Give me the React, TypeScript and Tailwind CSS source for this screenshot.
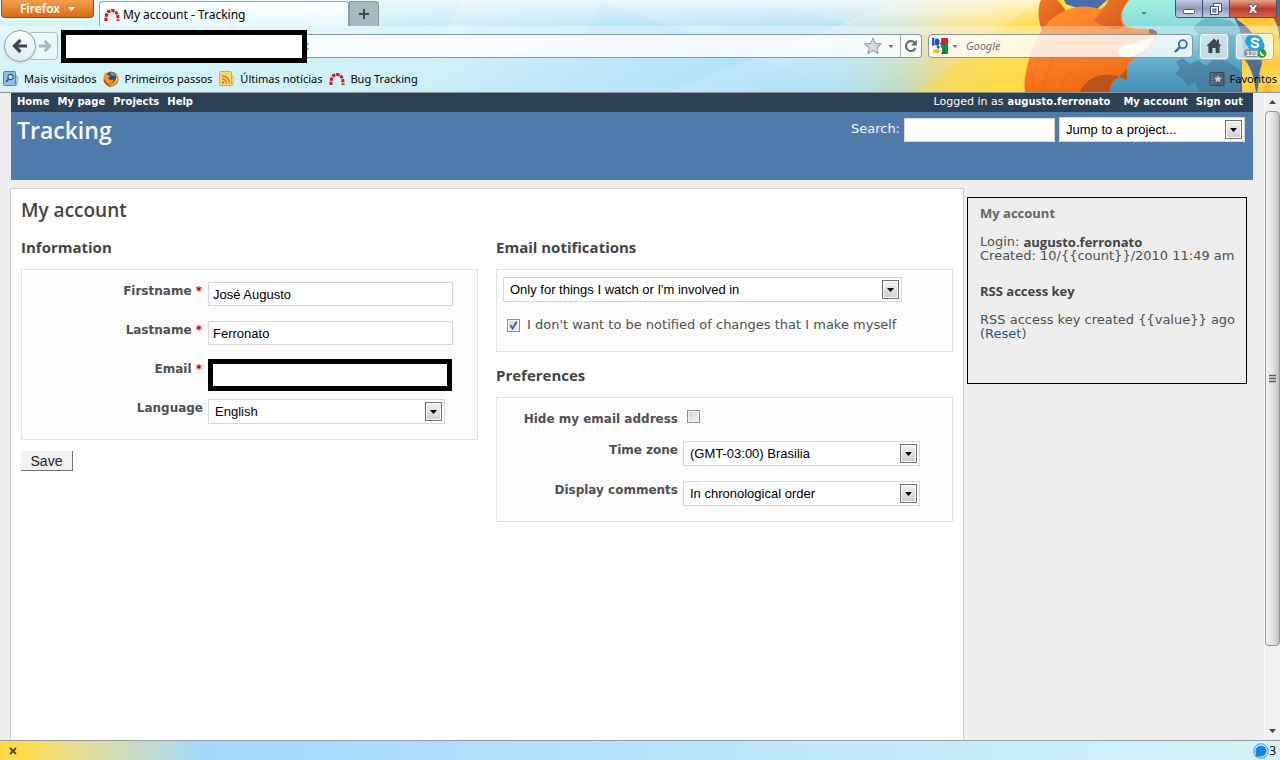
import React, { useState } from "react";

const verdana = "font-['DejaVu_Sans',Verdana,sans-serif]";
const trebuchet = "font-['Open_Sans','Trebuchet_MS',sans-serif]";
const segoe = "font-['Noto_Sans','Segoe_UI',sans-serif]";
const arial = "font-['Liberation_Sans',Arial,sans-serif]";

function ThemeArt() {
  return (
    <svg
      className="pointer-events-none absolute top-0 right-0 h-[92px] w-[1280px]"
      viewBox="0 0 1280 92"
      aria-hidden="true"
    >
      <defs>
        <linearGradient id="sky" x1="0" x2="1">
          <stop offset="0" stopColor="#d3f4fa" />
          <stop offset="0.28" stopColor="#ccf0f9" />
          <stop offset="0.45" stopColor="#bce6fa" />
          <stop offset="0.6" stopColor="#addffa" />
          <stop offset="0.66" stopColor="#b0dff2" />
          <stop offset="0.705" stopColor="#c3dcc0" />
          <stop offset="0.745" stopColor="#f1da70" />
          <stop offset="0.78" stopColor="#ffdc50" />
          <stop offset="1" stopColor="#ffd53c" />
        </linearGradient>
        <linearGradient id="topGlow" x1="0" x2="0" y1="0" y2="1">
          <stop offset="0" stopColor="#fff" stopOpacity="0.65" />
          <stop offset="1" stopColor="#fff" stopOpacity="0" />
        </linearGradient>
        <linearGradient id="beam" x1="0" x2="0.6" y1="0" y2="1">
          <stop offset="0" stopColor="#fff" stopOpacity="0.65" />
          <stop offset="1" stopColor="#fff" stopOpacity="0" />
        </linearGradient>
        <linearGradient id="globe" x1="0" x2="0" y1="0" y2="1">
          <stop offset="0" stopColor="#a0f0de" />
          <stop offset="0.4" stopColor="#7fd3de" />
          <stop offset="0.7" stopColor="#5aa8c8" />
          <stop offset="1" stopColor="#4a90b8" />
        </linearGradient>
        <linearGradient id="fur" x1="0" x2="0.5" y1="0" y2="1">
          <stop offset="0" stopColor="#ff9c3a" />
          <stop offset="0.5" stopColor="#fb7b20" />
          <stop offset="1" stopColor="#f06a14" />
        </linearGradient>
        <linearGradient id="ear" x1="0" x2="1" y1="0" y2="1">
          <stop offset="0" stopColor="#f27a2a" />
          <stop offset="1" stopColor="#cf571c" />
        </linearGradient>
        <linearGradient id="flame" x1="0" x2="0" y1="0" y2="1">
          <stop offset="0" stopColor="#ffc22e" />
          <stop offset="0.6" stopColor="#ffe061" />
          <stop offset="1" stopColor="#ffc53a" />
        </linearGradient>
      </defs>
      <rect width="1280" height="92" fill="url(#sky)" />
      <path d="M463 0 L410 92 H560 L600 0Z" fill="url(#beam)" opacity="0.35" />
      <path d="M600 0 L846 92 H990 L1000 0Z" fill="url(#beam)" opacity="0.4" />
      <path d="M668 92 L850 21 L900 0 H1040 L915 92Z" fill="url(#beam)" opacity="0.7" />
      <path d="M850 24 L905 0 H760Z" fill="#dff3fb" opacity="0.25" />
      <path d="M915 92 L1040 12 V92Z" fill="#ffd942" opacity="0.4" />
      <rect width="1045" height="26" fill="url(#topGlow)" />

      <path d="M1100 92 L1110 0 H1280 V92Z" fill="url(#globe)" />
      <path d="M1064 0 H1107 L1096 10 Q1080 10 1066 4Z" fill="#4870a8" />
      <path
        d="M1193 27 L1203 19 L1213 18 L1230 20 L1238 26 L1246 40 L1245 68 L1232 72 L1226 60 L1214 56 L1206 62 L1197 52 L1202 40Z"
        fill="#4e9ab4"
        opacity="0.5"
      />
      <path
        d="M1176 62 L1182 58 L1190 64 L1198 60 L1206 66 L1216 56 L1228 62 L1240 70 L1244 92 H1199 L1195 82 L1188 86 L1182 78 L1175 74 L1180 68Z"
        fill="#42789a"
        opacity="0.7"
      />
      <path d="M1232 0 H1280 V92 H1240 L1243 50 C1243 34 1238 24 1232 14Z" fill="#4c6c8e" />

      <path d="M1042 30 C1036 16 1039 4 1041 0 L1057 0 C1065 8 1067 12 1065 16Z" fill="url(#ear)" />
      <path
        d="M1025 92 C1022 72 1036 30 1053 18 C1066 8 1082 3 1100 9 L1116 0 H1129 C1122 8 1120 16 1124 25 C1132 31 1146 27 1155 31 C1160 35 1154 44 1148 49 C1137 59 1125 61 1127 69 L1127 80 L1119 77 C1112 81 1110 86 1110 92Z"
        fill="url(#fur)"
      />
      <path d="M1094 21 C1100 12 1108 4 1108 0 H1129 C1121 9 1117 18 1124 27 C1117 31 1107 29 1094 21Z" fill="url(#ear)" />
      <path d="M1119 50 C1124 42 1139 44 1154 37 C1152 48 1139 54 1130 57 C1123 59 1117 56 1119 50Z" fill="#fff1e6" />
      <path d="M1149 29 C1153 29 1158 31 1157 34 C1155 36 1151 35 1149 33Z" fill="#5a4440" />
      <path d="M1127 69 L1127 80 L1118 76 C1100 72 1086 78 1080 92 H1110 C1109 84 1113 80 1119 77Z" fill="#b9531a" />
      <g fill="none" stroke="#dc5410" strokeOpacity="0.25" strokeWidth="1.3">
        <path d="M1033 92 C1030 74 1037 63 1040 55" />
        <path d="M1043 92 C1042 76 1050 68 1052 60" />
        <path d="M1060 92 C1059 83 1066 76 1071 72" />
      </g>

      <path
        d="M1237 16 H1272 C1278 24 1280 34 1280 44 V66 L1262 66 C1262 44 1252 28 1237 20Z"
        fill="url(#flame)"
      />
      <path d="M1242 92 V57 C1250 64 1254 76 1256 92Z" fill="url(#flame)" />
      <path d="M1257 92 C1260 82 1258 70 1263 62 L1267 66 H1280 V92Z" fill="url(#flame)" />
      <path d="M1272 16 C1277 20 1279 26 1280 30 V16Z" fill="#b8502a" />
      <path d="M1262 92 C1266 86 1266 80 1268 76 C1271 82 1272 88 1271 92Z" fill="#ffab32" opacity="0.6" />

      <rect y="26" width="1280" height="66" fill="url(#beam)" opacity="0.3" />
      <rect y="26" width="1280" height="9" fill="#fff" opacity="0.25" />
    </svg>
  );
}

function RedmineMark() {
  return (
    <svg className="h-4 w-4 shrink-0" viewBox="0 0 16 16" aria-hidden="true">
      <path
        d="M2 14 C1.6 7 4 3.5 8 3.5 S14.4 7 14 14"
        fill="none"
        stroke="#c8161d"
        strokeWidth="3"
        strokeDasharray="3.3 1"
      />
    </svg>
  );
}

function MostVisited() {
  return (
    <svg className="h-4 w-4 shrink-0" viewBox="0 0 16 16" aria-hidden="true">
      <path d="M11 5 H14 Q15 9 13.5 14 H11Z" fill="#d6ebf8" stroke="#5e9ac8" />
      <rect x="0.5" y="0.5" width="12" height="14" rx="1" fill="#8cc2e6" stroke="#4a86b8" />
      <circle cx="7.5" cy="6" r="2.6" fill="#cfe8f8" stroke="#2b5f92" strokeWidth="1.2" />
      <path d="M5.6 8 L3 11" stroke="#2b5f92" strokeWidth="1.8" />
    </svg>
  );
}

function FirefoxMark() {
  return (
    <svg className="h-4 w-4 shrink-0" viewBox="0 0 16 16" aria-hidden="true">
      <circle cx="8" cy="8" r="7.6" fill="#e2701a" />
      <circle cx="8" cy="6.4" r="5.2" fill="#22508f" />
      <path d="M7 2 Q11 1 12.5 5 Q10 4 9 5Z" fill="#5ea0dc" />
      <path d="M0.8 5 L2 1.4 L4 3.8 L7 4.6 L5.4 7.4 Q7 10 11 8.6 Q10 12.6 6 12.4 Q2 11.6 0.8 5Z" fill="#f59628" />
      <path d="M13.6 3 Q16 8 12.6 12 Q9 15.6 5 13.8 Q11 14 12.4 9.6 Q13.6 7 13.6 3Z" fill="#fbc83e" />
      <path d="M1 9 Q3 15 8 15.4" fill="none" stroke="#a43a10" />
    </svg>
  );
}

function FeedMark() {
  return (
    <svg className="h-4 w-4 shrink-0" viewBox="0 0 16 16" aria-hidden="true">
      <path d="M11 5 H14 Q15 9 13.5 14 H11Z" fill="#fdf0bc" stroke="#d9ac3c" />
      <rect x="0.5" y="0.5" width="12" height="14" rx="1" fill="#f8d873" stroke="#d9a93a" />
      <circle cx="4" cy="11.5" r="1.2" fill="#e07a1c" />
      <path d="M3 8 Q7 8 7.4 12.6 M3 5 Q10 5 10.4 12.6" fill="none" stroke="#e07a1c" strokeWidth="1.5" />
    </svg>
  );
}

function GoogleMark() {
  return (
    <svg className="h-4 w-4 shrink-0" viewBox="0 0 16 16" aria-hidden="true">
      <rect width="16" height="16" rx="1" fill="#fff" />
      <path d="M9 0 H15 Q16 0 16 1 V6 H8 Q10 3 9 0Z" fill="#e01b22" />
      <path d="M9 6 H16 V15 Q16 16 15 16 H9 Q11 12 9.5 9.5Q8 8 9 6Z" fill="#16893a" />
      <ellipse cx="5" cy="4" rx="2.6" ry="3.6" fill="#1d55c4" />
      <path d="M0 0 H3 Q0.6 3 3 7 L0 8Z" fill="#1d55c4" />
      <path d="M6 7 Q9 9 6.4 11 L4.4 9Z" fill="#1d55c4" />
      <ellipse cx="4.6" cy="13.2" rx="3.4" ry="2.2" fill="#f6b620" />
    </svg>
  );
}

function Caret({ className }: { className: string }) {
  return (
    <svg className={className} viewBox="0 0 7 4" aria-hidden="true">
      <path d="M0 0 H7 L3.5 4Z" fill="currentColor" />
    </svg>
  );
}

function BrowserHeader() {
  const [url, setUrl] = useState("");
  const [query, setQuery] = useState("");
  return (
    <header
      className={`relative shrink-0 overflow-hidden border-b border-[#8f9599] bg-[#d3f4fa] text-xs text-black ${segoe}`}
    >
      <ThemeArt />
      <div className="relative flex h-[26px] items-start">
        <button className="ml-px flex h-[18px] w-[93px] items-center justify-center gap-2 rounded-b border border-t-0 border-[#9c4a0c] bg-linear-to-b from-[#f0a050] to-[#d96a10] leading-4 font-semibold text-white">
          Firefox
          <Caret className="h-1 w-[7px]" />
        </button>
        <div className="mt-px ml-[5px] flex h-[25px] w-[250px] items-center gap-[3px] rounded-t border border-b-0 border-[#8ba6b0] bg-linear-to-b from-white/90 to-[#edfafd]/80 px-1 pt-px">
          <RedmineMark />
          <span>My account - Tracking</span>
        </div>
        <button
          aria-label="New tab"
          className="mt-px flex h-[25px] w-[30px] items-center justify-center rounded-tr border border-b-0 border-[#87979d] bg-[#a5bac1]"
        >
          <svg className="h-3 w-3" viewBox="0 0 12 12">
            <path d="M6 1 V11 M1 6 H11" stroke="#3c4a50" strokeWidth="2" />
          </svg>
        </button>
        <div className="grow" />
        <Caret className="mt-3 mr-7 h-[3px] w-[6px] text-[#5b7480]" />
        <div className="mr-[3px] flex h-[18px] overflow-hidden rounded-b border border-t-0 border-[#47506e]">
          <button
            aria-label="Minimize"
            className="flex w-[27px] items-center justify-center border-r border-[#47506e] bg-linear-to-b from-[#c3cbe2] via-[#8e9abd] to-[#c0cfe6]"
          >
            <svg className="h-3 w-3" viewBox="0 0 12 12">
              <rect x="0.5" y="6.5" width="11" height="4" rx="1" fill="#fff" stroke="#50566b" />
            </svg>
          </button>
          <button
            aria-label="Restore"
            className="flex w-[27px] items-center justify-center border-r border-[#47506e] bg-linear-to-b from-[#c3cbe2] via-[#8e9abd] to-[#c0cfe6]"
          >
            <svg className="h-3 w-3" viewBox="0 0 12 12">
              <rect x="3.5" y="0.5" width="8" height="8" fill="#fff" stroke="#50566b" />
              <rect x="0.5" y="3.5" width="8" height="8" fill="#fff" stroke="#50566b" />
              <rect x="3" y="6" width="3" height="3" fill="#9aa5c4" stroke="#50566b" />
            </svg>
          </button>
          <button
            aria-label="Close window"
            className="flex w-[46px] items-center justify-center bg-linear-to-b from-[#e4a494] via-[#bf3a28] to-[#d4604a]"
          >
            <svg className="h-3 w-3" viewBox="0 0 12 12">
              <path
                d="M1 1.5 H4.2 L6 3.8 L7.8 1.5 H11 L7.8 6 L11 10.5 H7.8 L6 8.2 L4.2 10.5 H1 L4.2 6Z"
                fill="#fff"
                stroke="#54484f"
                strokeWidth="0.8"
              />
            </svg>
          </button>
        </div>
      </div>

      <div className="relative flex h-10 items-center pr-1.5">
        <button
          aria-label="Back"
          className="z-10 ml-1 flex h-8 w-8 shrink-0 items-center justify-center rounded-full border border-[#8ea0a8] bg-linear-to-b from-white to-[#dcebf0] shadow"
        >
          <svg className="h-4 w-4" viewBox="0 0 16 16">
            <path d="M8.5 2 L2.5 8 L8.5 14 M3 8 H15" fill="none" stroke="#3b4754" strokeWidth="3.2" />
          </svg>
        </button>
        <button
          aria-label="Forward"
          className="-ml-2 flex h-7 w-[30px] shrink-0 items-center justify-center rounded border border-[#a9bfc8] bg-white/40 pl-1"
        >
          <svg className="h-3.5 w-3.5" viewBox="0 0 16 16">
            <path d="M7.5 2 L13.5 8 L7.5 14 M1 8 H13" fill="none" stroke="#a5b8bf" strokeWidth="3.2" />
          </svg>
        </button>
        <input
          aria-label="Address"
          value={url}
          onChange={(e) => setUrl(e.target.value)}
          className="z-10 ml-[3px] h-[33px] w-[246px] shrink-0 border-5 border-black bg-white px-1 outline-none"
        />
        <div className="flex h-6 min-w-0 flex-1 items-center rounded-r border border-l-0 border-[#82979f] bg-white/80">
          <span className="-ml-px text-[#3c6a80]">:</span>
          <div className="grow" />
          <svg className="h-[18px] w-[18px]" viewBox="0 0 16 16" aria-hidden="true">
            <path
              d="M8 1 L10.1 5.7 L15.2 6.2 L11.4 9.7 L12.5 14.8 L8 12.1 L3.5 14.8 L4.6 9.7 L0.8 6.2 L5.9 5.7Z"
              fill="#d6dadd"
              stroke="#9b9fa2"
            />
          </svg>
          <Caret className="mx-1.5 h-[3px] w-[6px] text-[#6d7377]" />
          <button aria-label="Reload" className="flex h-full w-[21px] items-center justify-center border-l border-[#a5b1b6]">
            <svg className="h-3.5 w-3.5" viewBox="0 0 14 14">
              <path d="M11.5 9.2 A5 5 0 1 1 10.6 3.6" fill="none" stroke="#62676b" strokeWidth="2" />
              <path d="M12.8 0.8 V6.6 H7Z" fill="#62676b" />
            </svg>
          </button>
        </div>
        <div className="ml-1.5 flex h-6 w-[265px] shrink-0 items-center rounded border border-[#8d9495] bg-white/80 pr-1 pl-[3px]">
          <GoogleMark />
          <Caret className="mx-1 h-[3px] w-[6px] text-[#6d7377]" />
          <input
            aria-label="Web search"
            placeholder="Google"
            value={query}
            onChange={(e) => setQuery(e.target.value)}
            className="min-w-0 flex-1 bg-transparent pl-1 text-[11px] italic outline-none placeholder:text-[#6f7377]"
          />
          <svg className="h-3.5 w-3.5" viewBox="0 0 14 14" aria-hidden="true">
            <circle cx="8.8" cy="5.2" r="4" fill="none" stroke="#2e6ca8" strokeWidth="1.8" />
            <path d="M6 8 L1 13" stroke="#2e6ca8" strokeWidth="2.4" />
          </svg>
        </div>
        <button
          aria-label="Home page"
          className="ml-1.5 flex h-[27px] w-[30px] shrink-0 items-center justify-center rounded border border-[#9fb8c2] bg-white/60 inset-ring inset-ring-white/70"
        >
          <svg className="h-4 w-4" viewBox="0 0 16 16">
            <path d="M8 0.6 L15.6 8 H13.6 V15 H9.6 V10 H6.4 V15 H2.4 V8 H0.4Z" fill="#42474e" />
            <rect x="11" y="1.6" width="2" height="4" fill="#42474e" />
          </svg>
        </button>
        <button
          aria-label="Skype"
          className="ml-1.5 flex h-[27px] w-[39px] shrink-0 items-center justify-center rounded border border-[#9fb8c2] bg-white/65 inset-ring inset-ring-white/70"
        >
          <svg className="h-6 w-6" viewBox="0 0 24 24">
            <circle cx="8" cy="7" r="6" fill="#20a4e4" />
            <circle cx="15" cy="12" r="6.5" fill="#20a4e4" />
            <circle cx="12" cy="9" r="8" fill="#20a4e4" />
            <path
              d="M15.5 6 Q12 3.4 9.4 5.4 Q8 8 12.2 9 Q16.6 10 14.8 12.4 Q11.6 14.4 8.8 11.6"
              fill="none"
              stroke="#fff"
              strokeWidth="2.2"
              strokeLinecap="round"
            />
            <rect x="1" y="15" width="16" height="8" rx="4" fill="#8b9196" />
            <text x="3" y="22" fontSize="7" fontWeight="bold" fill="#fff" fontFamily="Liberation Sans">
              123
            </text>
            <circle cx="19" cy="19.5" r="4.4" fill="#2a9a2e" />
            <path d="M17.4 17.4 Q17.4 21 21 21.4" fill="none" stroke="#fff" strokeWidth="1.5" />
          </svg>
        </button>
      </div>

      <nav aria-label="Bookmarks" className="relative flex h-[26px] items-center px-[3px] text-[11px]">
        <a href="#most" className="flex items-center gap-[5px]">
          <MostVisited />
          Mais visitados
        </a>
        <a href="#first" className="ml-[7px] flex items-center gap-[5px]">
          <FirefoxMark />
          Primeiros passos
        </a>
        <a href="#news" className="ml-[7px] flex items-center gap-[5px]">
          <FeedMark />
          Últimas notícias
        </a>
        <a href="#bugs" className="ml-[7px] flex items-center gap-[5px]">
          <RedmineMark />
          Bug Tracking
        </a>
        <a href="#favorites" className="ml-auto flex items-center gap-[5px]">
          <svg className="h-3.5 w-4" viewBox="0 0 16 14" aria-hidden="true">
            <rect x="1" y="0.5" width="14" height="13" rx="1" fill="#51616c" stroke="#39464f" />
            <path
              d="M9 3 L10.1 5.6 L13 5.9 L10.8 7.8 L11.5 10.6 L9 9.1 L6.5 10.6 L7.2 7.8 L5 5.9 L7.9 5.6Z"
              fill="#c3d0d8"
            />
            <path d="M3 1 V13" stroke="#93a3ac" strokeDasharray="1 1" />
          </svg>
          Favoritos
        </a>
      </nav>
    </header>
  );
}

function Select({
  id,
  value,
  className,
  label,
}: {
  id: string;
  value: string;
  className: string;
  label?: string;
}) {
  return (
    <div className={`grid h-[25px] items-center ${className}`}>
      <select
        id={id}
        aria-label={label}
        className={`col-start-1 row-start-1 h-[25px] w-full appearance-none border border-[#d7d7d7] bg-white pr-6 pl-1.5 text-[13px] text-black ${arial}`}
      >
        <option>{value}</option>
      </select>
      <span className="pointer-events-none col-start-1 row-start-1 mr-[3px] flex h-[19px] w-[17px] items-center justify-center justify-self-end border border-[#707070] bg-linear-to-b from-[#f2f2f2] to-[#cfcfcf] text-black inset-ring inset-ring-[#fafafa]">
        <Caret className="h-1 w-[7px]" />
      </span>
    </div>
  );
}

function Checkbox({ id, defaultChecked }: { id: string; defaultChecked?: boolean }) {
  return (
    <span className="grid h-[13px] w-[13px] shrink-0">
      <input
        id={id}
        type="checkbox"
        defaultChecked={defaultChecked}
        className="peer col-start-1 row-start-1 h-[13px] w-[13px] appearance-none border border-[#8e8f8f] bg-linear-to-br from-[#cfd2d8] to-[#f6f6f6] inset-ring inset-ring-[#f4f4f4]"
      />
      <svg
        className="pointer-events-none invisible col-start-1 row-start-1 h-[13px] w-[13px] peer-checked:visible"
        viewBox="0 0 13 13"
        aria-hidden="true"
      >
        <path d="M3.4 6.2 L5.6 9.4 L9.6 2.8" fill="none" stroke="#4a5f97" strokeWidth="2" />
      </svg>
    </span>
  );
}

function SectionTitle({ children }: { children: React.ReactNode }) {
  return <h3 className={`text-[15px] leading-5 font-bold text-[#444] ${trebuchet}`}>{children}</h3>;
}

function TextField({ id, label, value }: { id: string; label: string; value: string }) {
  return (
    <div className="flex h-[39px] items-start gap-[5px]">
      <label htmlFor={id} className="w-[181px] pr-px text-right leading-[18px] font-bold">
        {label} <span className="text-[#bb0000]">*</span>
      </label>
      <input
        id={id}
        defaultValue={value}
        className={`h-6 w-[245px] border border-[#d7d7d7] bg-white px-1 text-[13px] text-black ${arial}`}
      />
    </div>
  );
}

function AccountForm() {
  return (
    <main className="min-w-0 flex-1 border border-b-0 border-[#cfcfcf] bg-white px-2.5 pt-[9px]">
      <h2 className={`text-[19px] leading-6 font-semibold text-[#444] ${trebuchet}`}>My account</h2>
      <form className="mt-[15px] grid grid-cols-2 gap-x-[18px]" onSubmit={(e) => e.preventDefault()}>
        <div>
          <SectionTitle>Information</SectionTitle>
          <div className="mt-3 border border-[#e4e4e4] bg-[#fcfcfc] pt-3 pb-[15px] text-[#505050]">
            <TextField id="firstname" label="Firstname" value="José Augusto" />
            <TextField id="lastname" label="Lastname" value="Ferronato" />
            <div className="flex h-[39px] items-start gap-[5px]">
              <label htmlFor="email" className="w-[181px] pr-px text-right leading-[18px] font-bold">
                Email <span className="text-[#bb0000]">*</span>
              </label>
              <input
                id="email"
                className="-mt-px h-8 w-[244px] border-5 border-black bg-white px-1 text-[13px] outline-none"
              />
            </div>
            <div className="flex items-start gap-[5px]">
              <label htmlFor="language" className="w-[181px] text-right leading-[18px] font-bold">
                Language
              </label>
              <Select id="language" value="English" className="w-[237px]" />
            </div>
          </div>
          <button
            type="submit"
            className={`mt-[11px] h-5 w-[52px] border-r border-b border-[#707070] bg-[#f2f2f2] text-sm leading-5 text-[#222] ${arial}`}
          >
            Save
          </button>
        </div>

        <div>
          <SectionTitle>Email notifications</SectionTitle>
          <div className="mt-3 border border-[#e4e4e4] bg-[#fcfcfc] px-1.5 pt-[7px] pb-[18px] text-[#505050]">
            <Select
              id="notify"
              label="Email notifications"
              value="Only for things I watch or I'm involved in"
              className="w-[399px] max-w-full"
            />
            <div className="mt-[15px] ml-1 flex items-center gap-[7px]">
              <Checkbox id="no-self" defaultChecked />
              <label htmlFor="no-self" className="text-[13px] leading-4">
                I don't want to be notified of changes that I make myself
              </label>
            </div>
          </div>

          <div className="mt-[13px]">
            <SectionTitle>Preferences</SectionTitle>
          </div>
          <div className="mt-3 border border-[#e4e4e4] bg-[#fcfcfc] pt-3 pb-[15px] text-[#505050]">
            <div className="flex h-[31px] items-start gap-[9px]">
              <label htmlFor="hide-mail" className="w-[181px] text-right leading-[18px] font-bold">
                Hide my email address
              </label>
              <Checkbox id="hide-mail" />
            </div>
            <div className="flex h-10 items-start gap-[5px]">
              <label htmlFor="tz" className="w-[181px] text-right leading-[18px] font-bold">
                Time zone
              </label>
              <Select id="tz" value="(GMT-03:00) Brasilia" className="w-[237px]" />
            </div>
            <div className="flex items-start gap-[5px]">
              <label htmlFor="order" className="w-[181px] text-right leading-[18px] font-bold">
                Display comments
              </label>
              <Select id="order" value="In chronological order" className="w-[237px]" />
            </div>
          </div>
        </div>
      </form>
    </main>
  );
}

function Sidebar() {
  return (
    <aside className="mt-[9px] mr-1.5 ml-[3px] h-[187px] w-[280px] shrink-0 border border-black pt-[7px] pr-1 pl-3 text-[13px] leading-[14px] text-[#505050]">
      <h3 className={`text-[13px] leading-4 font-bold text-[#666] ${trebuchet}`}>My account</h3>
      <div className="mt-3.5">
        <p className="flex items-center gap-1">
          Login:
          <strong className={`text-[#444] ${trebuchet}`}>augusto.ferronato</strong>
        </p>
        <p>Created: 10/{"{{count}}"}/2010 11:49 am</p>
      </div>
      <h4 className={`mt-5 text-[13px] leading-4 font-bold text-[#444] ${trebuchet}`}>RSS access key</h4>
      <p className="mt-3.5">
        RSS access key created {"{{value}}"} ago
        <br />(
        <a href="#reset" className="text-[#2a5685]">
          Reset
        </a>
        )
      </p>
    </aside>
  );
}

function Scrollbar() {
  return (
    <div className="flex w-4 shrink-0 flex-col border-l border-[#fafafa] bg-[#f0f0f0]" aria-hidden="true">
      <div className="flex h-[18px] items-center justify-center">
        <Caret className="h-1 w-[7px] rotate-180 text-[#444]" />
      </div>
      <div className="flex h-[535px] items-center justify-center rounded-sm border border-[#979797] bg-linear-to-r from-[#f5f5f5] via-[#e4e4e6] to-[#bfc0c4]">
        <svg className="h-2.5 w-2" viewBox="0 0 8 10">
          <path d="M0 1.5 H7 M0 4.5 H7 M0 7.5 H7" stroke="#5c5c60" strokeWidth="1.4" />
        </svg>
      </div>
      <div className="grow" />
      <div className="flex h-[18px] items-center justify-center">
        <Caret className="h-1 w-[7px] text-[#444]" />
      </div>
    </div>
  );
}

export default function App() {
  return (
    <div className={`flex h-screen flex-col bg-[#eee] text-xs leading-4 ${verdana}`}>
      <BrowserHeader />
      <div className="flex min-h-0 flex-1">
        <div className="flex min-w-0 flex-1 flex-col overflow-hidden px-[11px]">
          <nav
            aria-label="Account"
            className="flex h-[19px] shrink-0 items-center gap-2 bg-[#2c4056] pr-2.5 pb-0.5 pl-1.5 text-[10px] font-bold text-white"
          >
            <a href="#home">Home</a>
            <a href="#page">My page</a>
            <a href="#projects">Projects</a>
            <a href="#help">Help</a>
            <span className="mr-[5px] ml-auto flex items-baseline gap-1">
              <span className="text-[11px] font-normal">Logged in as</span>
              <a href="#user">augusto.ferronato</a>
            </span>
            <a href="#account">My account</a>
            <a href="#signout">Sign out</a>
          </nav>
          <header className="flex h-[68px] shrink-0 items-start justify-between bg-[#507aaa] pr-2 pl-1.5 text-[#f8f8f8]">
            <h1 className={`mt-[3px] text-[23px] leading-[30px] font-semibold ${trebuchet}`}>Tracking</h1>
            <div className="mt-[5px] flex items-center gap-1">
              <label htmlFor="q" className="pb-0.5 text-[13px]">
                Search:
              </label>
              <input id="q" className="h-6 w-[151px] border border-[#d7d7d7] bg-white px-1 text-black" />
              <Select id="jump" label="Project" value="Jump to a project..." className="w-[186px]" />
            </div>
          </header>
          <div className="mt-2 -ml-px flex min-h-0 flex-1 items-stretch">
            <AccountForm />
            <Sidebar />
          </div>
        </div>
        <Scrollbar />
      </div>
      <footer
        className={`flex h-5 shrink-0 items-center border-t border-[#9a9a9e] bg-linear-to-r from-[#ffdb4a] from-2% via-[#a2d8fb] via-16% to-[#d3f4fa] text-xs text-black ${segoe}`}
      >
        <button aria-label="Close add-on bar" className="ml-[9px] flex">
          <svg className="h-2 w-2" viewBox="0 0 8 8">
            <path d="M1 1 L7 7 M7 1 L1 7" stroke="#4a4a3c" strokeWidth="1.8" />
          </svg>
        </button>
        <span className="mr-1 ml-auto flex items-center">
          <svg className="h-4 w-4" viewBox="0 0 16 16" aria-hidden="true">
            <circle cx="8" cy="8" r="7.2" fill="#e4f4ff" stroke="#3c8ad8" />
            <circle cx="8" cy="8" r="5.6" fill="#1486e4" />
            <path d="M2.6 14 L3.4 9 L8 13Z" fill="#1486e4" />
          </svg>
          3
        </span>
      </footer>
    </div>
  );
}
